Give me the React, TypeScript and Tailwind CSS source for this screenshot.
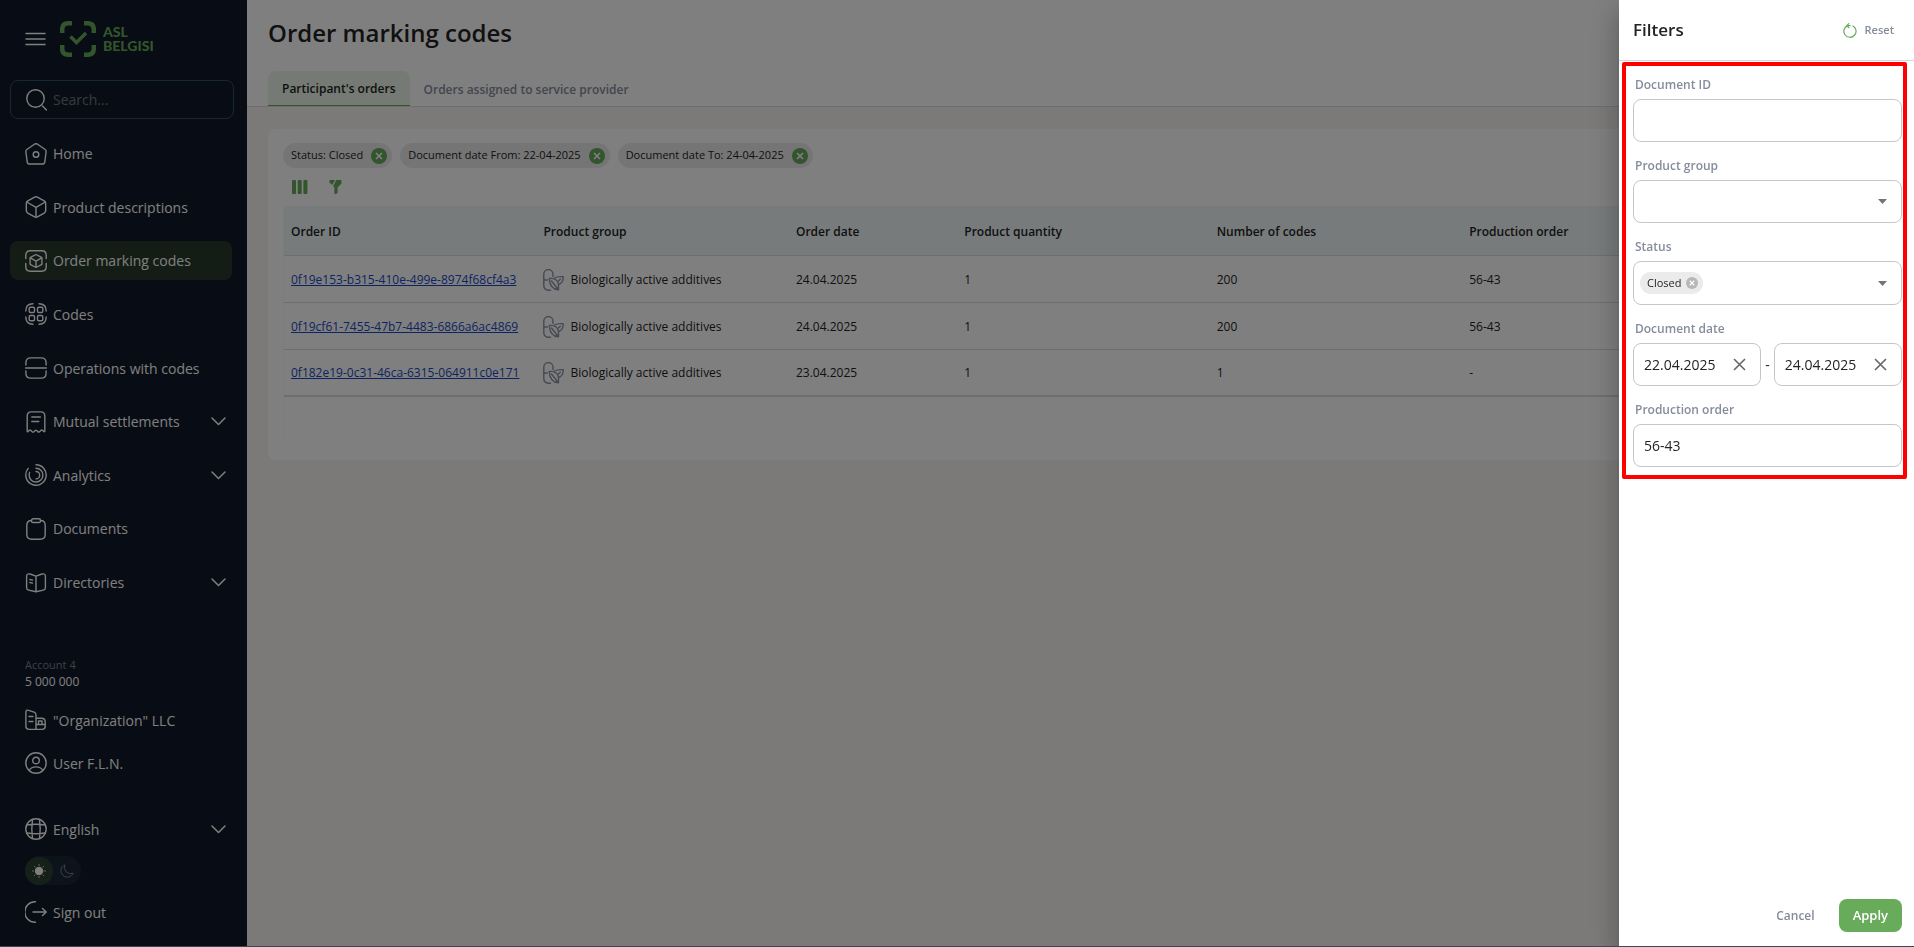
import * as React from "react"
import { clsx } from "clsx"

const Icon = ({ children, size = 22, className }: { children: React.ReactNode; size?: number; className?: string }) => (
  <svg
    width={size}
    height={size}
    viewBox="0 0 22 22"
    fill="none"
    stroke="currentColor"
    strokeWidth="1.4"
    strokeLinecap="round"
    strokeLinejoin="round"
    aria-hidden="true"
    className={clsx("shrink-0", className)}
  >
    {children}
  </svg>
)

const icons = {
  home: (
    <Icon>
      <path d="M9.4 1.2q1.6-1 3.2 0l7.2 5q1.5 1.1 1.3 2.8l-1.3 9.8q-.3 2.2-2.4 2.2H4.6q-2.1 0-2.4-2.2L.9 9Q.7 7.300 2.200 6.200z" />
      <circle cx="11" cy="11.500" r="2.800" />
    </Icon>
  ),
  cube: (
    <Icon>
      <path d="M9.600 1.100q1.400-.7 2.800 0l6.800 3.800q1.500.9 1.500 2.500v7.200q0 1.600-1.500 2.500l-6.800 3.800q-1.400.7-2.800 0l-6.800-3.800q-1.500-.9-1.500-2.500V7.400q0-1.600 1.500-2.500z" />
      <path d="M1.700 6 11 11.400 20.300 6M11 11.400v9.800" />
    </Icon>
  ),
  marking: (
    <Icon>
      <path d="M.8 8.500V5.300Q.8.800 5.300.800h11.400q4.500 0 4.500 4.500v3.200M.8 13.500v3.200q0 4.500 4.500 4.500h11.400q4.500 0 4.500-4.500v-3.200" />
      <path d="M11 4.500 16.900 7.700v6.600L11 17.500l-5.900-3.200V7.700zM5.300 7.900 11 11.100l5.700-3.200M11 11.100v6.200" />
    </Icon>
  ),
  codes: (
    <Icon>
      <path d="M.8 8Q.8.800 8 .8M14 .8q7.200 0 7.200 7.200M.8 14q0 7.200 7.200 7.200M14 21.200q7.200 0 7.200-7.200" />
      <rect x="4.200" y="4.200" width="5.300" height="5.300" rx="1.300" />
      <rect x="12.500" y="4.200" width="5.300" height="5.300" rx="1.300" />
      <rect x="4.200" y="12.500" width="5.300" height="5.300" rx="1.300" />
      <rect x="12.500" y="12.500" width="5.300" height="5.300" rx="1.300" />
    </Icon>
  ),
  operations: (
    <Icon>
      <path d="M.9 8V5.800Q.9.900 5.800.900h10.400q4.900 0 4.900 4.900V8M.9 14v2.200q0 4.900 4.900 4.900h10.400q4.900 0 4.900-4.900V14M.7 11h20.600" />
    </Icon>
  ),
  receipt: (
    <Icon>
      <path d="M2.200 20V5Q2.200.900 6.300.900h9.400q4.100 0 4.100 4.100v15q0 1.200-1 .5l-1.300-1.200q-.8-.8-1.700.1l-1.300 1.300q-.8.800-1.700 0L11.700 19.500q-.7-.7-1.500 0l-1.300 1.300q-.8.700-1.700 0l-1.300-1.300q-.9-.9-1.700-.1L3 20.600q-.8.500-.8-.6zM6.800 6h8.600M6.800 10.500h7" />
    </Icon>
  ),
  analytics: (
    <Icon>
      <path d="M11 .8a10.200 10.200 0 1 1-7.800 3.600" />
      <path d="M11 4.200a6.900 6.900 0 1 1-6.900 6.800q0-1.400.6-2.700" />
      <path d="M11 7.500a3.700 3.700 0 0 1 0 7.400" />
    </Icon>
  ),
  documents: (
    <Icon>
      <path d="M6.500 2.500Q1.800 2.500 1.800 7.500v8.700q0 5 5 5h8.400q5 0 5-5V7.500q0-5-4.700-5" />
      <rect x="6.500" y=".8" width="9" height="3.700" rx="1.600" />
    </Icon>
  ),
  book: (
    <Icon>
      <path d="M11 4.200v15.600M11 4.200 5 2Q1.600 1.200 1.600 4.400v11.400q0 2 2 2.300L11 19.800l7.400-1.700q2-.3 2-2.300V4.400q0-3.200-3.400-2.400zM4.900 7.500l2.600.6M4.900 10.500l2.600.6" />
    </Icon>
  ),
  building: (
    <Icon>
      <path d="M11 20.400H4Q.9 20.400.9 17.300V3.200q0-2.800 2.700-1.900l5.500 1.900Q11 3.900 11 6zM11 9.200h5.500q3.700 0 3.700 3.700v4.400q0 3.100-3.100 3.100H11M4 7.500h4M4 12.500h4M11.500 15.500h8.500M13.500 15.300v-3.300h3.500v3.300" />
    </Icon>
  ),
  user: (
    <Icon>
      <circle cx="11" cy="11" r="10.200" />
      <circle cx="11" cy="8.500" r="3.300" />
      <path d="M4.200 18.400q1.900-3.500 6.800-3.500t6.800 3.500" />
    </Icon>
  ),
  globe: (
    <Icon>
      <circle cx="11" cy="11" r="10.200" />
      <path d="M1.800 7q9.200-1.400 18.400 0M1.800 15q9.200 1.400 18.400 0M7.500 1.500q-1.400 9.500 0 19M14.500 1.500q1.400 9.500 0 19" />
    </Icon>
  ),
  signOut: (
    <Icon>
      <path d="M10.500.800H10a10.200 10.200 0 0 0 0 20.400h.5M8 11h13M17.500 7.500 21.200 11l-3.700 3.500" />
    </Icon>
  ),
  search: (
    <Icon>
      <circle cx="10.500" cy="9.500" r="8.700" />
      <path d="m17.500 17 4 4" />
    </Icon>
  ),
}

const Chevron = ({ className }: { className?: string }) => (
  <svg width="15" height="9" viewBox="0 0 15 9" fill="none" stroke="currentColor" strokeWidth="1.500" strokeLinecap="round" strokeLinejoin="round" aria-hidden="true" className={className}>
    <path d="m1 1 6.500 6.500L14 1" />
  </svg>
)

const CrossCircle = ({ size, className }: { size: number; className?: string }) => (
  <svg width={size} height={size} viewBox="0 0 16 16" aria-hidden="true" className={className}>
    <circle cx="8" cy="8" r="8" fill="currentColor" />
    <path d="m5 5 6 6M11 5l-6 6" stroke="#fff" strokeWidth="1.600" />
  </svg>
)

const PillLeafIcon = () => (
  <svg width="21" height="22" viewBox="0 0 21 22" fill="none" stroke="#8a94a6" strokeWidth="1.400" strokeLinecap="round" strokeLinejoin="round" aria-hidden="true" className="shrink-0">
    <path d="M10 7.500V5.200a4.500 4.500 0 0 0-9.200 0v11.300q0 4.200 4.200 4.700h2.500M1 11h3.300" />
    <path d="M6.200 9.500q7.500-.8 9.300 5.500v5.800Q7 20.600 6.200 9.500zM8.500 12l7 8.800" />
    <path d="M11.500 9q3-1.800 8.700-1.300.2 6.300-4.500 7.800M15.300 12l2-1.800" />
  </svg>
)

const navItems = [
  { label: "Home", icon: icons.home },
  { label: "Product descriptions", icon: icons.cube },
  { label: "Order marking codes", icon: icons.marking, active: true },
  { label: "Codes", icon: icons.codes },
  { label: "Operations with codes", icon: icons.operations },
  { label: "Mutual settlements", icon: icons.receipt, expandable: true },
  { label: "Analytics", icon: icons.analytics, expandable: true },
  { label: "Documents", icon: icons.documents },
  { label: "Directories", icon: icons.book, expandable: true },
]

const chips = ["Status: Closed", "Document date From: 22-04-2025", "Document date To: 24-04-2025"]

const columns = [
  { label: "Order ID", width: "w-3/19" },
  { label: "Product group", width: "w-3/19" },
  { label: "Order date", width: "w-2/19" },
  { label: "Product quantity", width: "w-3/19" },
  { label: "Number of codes", width: "w-3/19" },
  { label: "Production order", width: "w-5/19" },
]

const orders = [
  { id: "0f19e153-b315-410e-499e-8974f68cf4a3", group: "Biologically active additives", date: "24.04.2025", quantity: 1, codes: 200, production: "56-43" },
  { id: "0f19cf61-7455-47b7-4483-6866a6ac4869", group: "Biologically active additives", date: "24.04.2025", quantity: 1, codes: 200, production: "56-43" },
  { id: "0f182e19-0c31-46ca-6315-064911c0e171", group: "Biologically active additives", date: "23.04.2025", quantity: 1, codes: 1, production: "-" },
]

function Logo() {
  return (
    <div className="flex items-center gap-[7px] text-[#67ab5b]">
      <svg width="36" height="36" viewBox="0 0 36 36" fill="none" stroke="currentColor" strokeWidth="4.500" aria-hidden="true">
        <path d="M2.200 12V8.500q0-6.300 6.300-6.300H12M24 2.200h3.500q6.300 0 6.300 6.300V12M33.800 24v3.500q0 6.300-6.300 6.300H24M12 33.800H8.500q-6.300 0-6.300-6.300V24" />
        <path d="m10.500 15.500 6 6L26 12" strokeWidth="3.500" />
      </svg>
      <div className="flex flex-col font-[Lato] text-[14px] leading-[14px] font-black">
        <span>ASL</span>
        <span>BELGISI</span>
      </div>
    </div>
  )
}

function Sidebar() {
  return (
    <aside className="flex w-[247px] shrink-0 flex-col bg-[#101828] text-[14px] text-white">
      <div className="flex h-[64px] items-center gap-[14px] pt-[14px] pl-[25px]">
        <button type="button" aria-label="Menu">
          <svg width="21" height="14" viewBox="0 0 21 14" stroke="currentColor" strokeWidth="1.500" strokeLinecap="round" aria-hidden="true">
            <path d="M1 1.500h19M1 7h19M1 12.500h19" />
          </svg>
        </button>
        <Logo />
      </div>

      <label className="mt-4 mr-[13px] ml-[10px] flex h-[39px] items-center gap-[6px] rounded-lg border border-[#2f5260] pl-[14px]">
        {icons.search}
        <input type="search" placeholder="Search..." aria-label="Search" className="w-full bg-transparent outline-none placeholder:text-[#70757e]" />
      </label>

      <nav className="mt-[15px] mr-[15px] ml-[10px] flex h-[468px] flex-col justify-between">
        {navItems.map((item) => {
          const style = clsx("flex h-[39px] items-center gap-[6px] rounded-lg pr-[6px] pl-[15px] text-left", item.active && "bg-[#263a2c]")
          return item.expandable ? (
            <button key={item.label} type="button" className={style}>
              {item.icon}
              {item.label}
              <Chevron className="ml-auto" />
            </button>
          ) : (
            <a key={item.label} href="#" className={style}>
              {item.icon}
              {item.label}
            </a>
          )
        })}
      </nav>

      <div className="flex flex-col pr-[21px] pl-[25px]">
        <div className="mt-[55px] text-[11px] leading-4 text-[#7b828e]">Account 4</div>
        <div className="text-[12px] leading-[18px]">5 000 000</div>
        <a href="#" className="mt-[17px] flex h-[24px] items-center gap-[6px]">
          {icons.building}
          "Organization" LLC
        </a>
        <a href="#" className="mt-[19px] flex h-[24px] items-center gap-[6px]">
          {icons.user}
          User F.L.N.
        </a>
        <label className="mt-[42px] flex h-[24px] items-center gap-[6px]">
          {icons.globe}
          <select aria-label="Language" className="flex-1 appearance-none bg-transparent outline-none">
            <option>English</option>
          </select>
          <Chevron />
        </label>
        <button type="button" role="switch" aria-checked="false" aria-label="Dark theme" className="mt-[15px] flex h-[29px] w-[56px] items-center rounded-full bg-[#1a2634]">
          <span className="flex size-[28px] items-center justify-center rounded-full bg-[#2a4330]">
            <svg width="14" height="14" viewBox="0 0 14 14" stroke="currentColor" strokeLinecap="round" aria-hidden="true">
              <circle cx="7" cy="7" r="3.700" fill="currentColor" />
              <path d="M7 .7v.6M7 12.700v.6M.7 7h.6M12.700 7h.6M2.600 2.600l.4.400M11 11l.4.400M2.600 11.400l.4-.4M11 3l.4-.4" />
            </svg>
          </span>
          <svg width="14" height="14" viewBox="0 0 14 14" fill="none" stroke="#7d8794" strokeLinejoin="round" aria-hidden="true" className="ml-[7px]">
            <path d="M4.800.8a6.400 6.400 0 1 0 8.400 8.400A6.400 6.400 0 0 1 4.800.8z" />
          </svg>
        </button>
        <a href="#" className="mt-[15px] flex h-[24px] items-center gap-[6px]">
          {icons.signOut}
          Sign out
        </a>
      </div>
    </aside>
  )
}

function OrdersTable() {
  return (
    <div className="min-h-[238px] border-l border-[#fafafa]">
      <table className="w-full table-fixed border-collapse text-left text-[12px] text-[#232323]">
        <thead>
          <tr className="h-[49px] border-b border-[#dcdcdc] bg-[#f0f7f8]">
            {columns.map((column) => (
              <th key={column.label} className={clsx("pt-1 pl-[7px] font-semibold", column.width)}>
                {column.label}
              </th>
            ))}
          </tr>
        </thead>
        <tbody>
          {orders.map((order) => (
            <tr key={order.id} className="h-[47px] border-b border-[#dcdcdc] last:border-b-2">
              <td className="pt-0.5 pl-[7px]">
                <a href="#" className="text-[#1a49c4] underline">
                  {order.id}
                </a>
              </td>
              <td className="pt-0.5 pl-[7px]">
                <span className="flex items-center gap-[6px]">
                  <PillLeafIcon />
                  {order.group}
                </span>
              </td>
              <td className="pt-0.5 pl-[7px]">{order.date}</td>
              <td className="pt-0.5 pl-[7px]">{order.quantity}</td>
              <td className="pt-0.5 pl-[7px]">{order.codes}</td>
              <td className="pt-0.5 pl-[7px]">{order.production}</td>
            </tr>
          ))}
        </tbody>
      </table>
    </div>
  )
}

function Orders() {
  return (
    <main className="min-w-0 flex-1 bg-[#f6f5f0]">
      <header className="border-b border-[#dcdcdc] bg-white pl-[21px]">
        <h1 className="pt-4 text-[24px] leading-[34px] font-semibold text-[#232323]">Order marking codes</h1>
        <div role="tablist" className="mt-[21px] flex text-[12px] font-semibold">
          <button type="button" role="tab" aria-selected="true" className="h-[35px] rounded-t-lg border-b border-[#67ab5b] bg-[#eaf4e8] px-[14px] pt-0.5 text-[#232323]">
            Participant's orders
          </button>
          <button type="button" role="tab" aria-selected="false" className="h-[35px] px-[14px] pt-0.5 text-[#858c9b]">
            Orders assigned to service provider
          </button>
        </div>
      </header>

      <section className="mt-[22px] mr-4 ml-[21px] rounded-lg bg-white px-[15px] pt-[14px] pb-4">
        <div className="flex gap-2">
          {chips.map((chip) => (
            <span key={chip} className="flex h-[25px] items-center gap-2 rounded-full bg-[#ebebeb] pr-[5px] pl-2 text-[11px] text-[#232323]">
              {chip}
              <button type="button" aria-label={"Remove " + chip} className="text-[#67ab5b]">
                <CrossCircle size={16} />
              </button>
            </span>
          ))}
        </div>
        <div className="flex h-[38px] items-center gap-[21px] pl-[9px] text-[#67ab5b]">
          <button type="button" aria-label="Columns">
            <svg width="16" height="14" viewBox="0 0 16 14" fill="currentColor" aria-hidden="true">
              <rect width="4" height="14" rx="1" />
              <rect x="5.700" width="4" height="14" rx="1" />
              <rect x="11.400" width="4" height="14" rx="1" />
            </svg>
          </button>
          <button type="button" aria-label="Filters">
            <svg width="13" height="14" viewBox="0 0 13 14" fill="currentColor" aria-hidden="true">
              <path d="M7.300 0H11.500q1 0 1 1v1.800q0 .7-.5 1.200L8.600 7.500v5q0 .8-.8 1.100l-1.400.4q-1 .2-1-.8V7.500L4.200 6z" />
              <path d="M1.300 0h4.800L3.200 4.900.9 2.900Q.4 2.400.4 1.800V.9Q.4 0 1.300 0z" />
            </svg>
          </button>
        </div>
        <OrdersTable />
      </section>
    </main>
  )
}

const fieldBox = "rounded-lg border border-[#c6c6c6] bg-white"
const fieldLabel = "pl-[2px] text-[12px] leading-[18px] font-semibold text-[#858c9b]"

function TextField({ label, value }: { label: string; value?: string }) {
  const id = React.useId()
  return (
    <div className="flex flex-col gap-[5px]">
      <label htmlFor={id} className={fieldLabel}>{label}</label>
      <input id={id} type="text" defaultValue={value} className={clsx(fieldBox, "h-[43px] w-full px-[10px] outline-none")} />
    </div>
  )
}

function SelectField({ label, tag }: { label: string; tag?: string }) {
  const id = React.useId()
  return (
    <div className="flex flex-col gap-[5px]">
      <label htmlFor={id} className={fieldLabel}>{label}</label>
      <div className={clsx(fieldBox, "flex items-center pr-[14px] pl-[6px]", tag ? "h-[44px]" : "h-[43px]")}>
        {tag && (
          <span className="flex h-[22px] items-center gap-[5px] rounded-full bg-[#ebebeb] pr-[5px] pl-[7px] text-[11px]">
            {tag}
            <button type="button" aria-label={"Remove " + tag} className="text-[#b7b7b7]">
              <CrossCircle size={12} />
            </button>
          </span>
        )}
        <select id={id} className="h-full flex-1 appearance-none bg-transparent outline-none">
          <option></option>
        </select>
        <svg width="9" height="5" viewBox="0 0 9 5" fill="#757575" aria-hidden="true">
          <path d="M0 0h9L4.500 5z" />
        </svg>
      </div>
    </div>
  )
}

function DateInput({ label, value }: { label: string; value: string }) {
  return (
    <div className={clsx(fieldBox, "flex h-[43px] min-w-0 flex-1 items-center pr-[14px] pl-[10px]")}>
      <input type="text" aria-label={label} defaultValue={value} className="w-0 flex-1 outline-none" />
      <button type="button" aria-label={"Clear " + label}>
        <svg width="13" height="13" viewBox="0 0 13 13" stroke="#666" strokeWidth="1.600" aria-hidden="true">
          <path d="m1 1 11 11M12 1 1 12" />
        </svg>
      </button>
    </div>
  )
}

function FiltersDrawer() {
  return (
    <div
      role="dialog"
      aria-label="Filters"
      className="fixed inset-y-0 right-0 flex w-[295px] flex-col bg-white text-[14px] text-[#232323] shadow-[0_8px_10px_-5px_rgba(0,0,0,0.2),0_16px_24px_2px_rgba(0,0,0,0.14),0_6px_30px_5px_rgba(0,0,0,0.12)]"
    >
      <div className="flex h-[61px] shrink-0 items-center justify-between border-b border-[#d8d8d8] pr-5 pl-[14px]">
        <h2 className="text-[17px] font-semibold">Filters</h2>
        <button type="button" className="flex items-center gap-2 text-[11px] font-semibold text-[#858c9b]">
          <svg width="14" height="15" viewBox="0 0 14 15" fill="none" stroke="#67ab5b" strokeWidth="1.200" strokeLinecap="round" strokeLinejoin="round" aria-hidden="true">
            <path d="M10 2.900a6.100 6.100 0 1 1-5.500-.3M4 2.500h3.200M4 2.500 5.800.7M4 2.500l1.800 2" />
          </svg>
          Reset
        </button>
      </div>

      <form className="mt-px mr-[7px] ml-[3px] flex flex-col gap-[15px] rounded-[2px] border-4 border-[#ff0000] pt-[10px] pr-px pb-2 pl-[7px]">
        <TextField label="Document ID" />
        <SelectField label="Product group" />
        <SelectField label="Status" tag="Closed" />
        <fieldset className="min-w-0">
          <legend className={clsx(fieldLabel, "mb-[5px]")}>Document date</legend>
          <div className="flex items-center gap-1">
            <DateInput label="date from" value="22.04.2025" />
            <span>-</span>
            <DateInput label="date to" value="24.04.2025" />
          </div>
        </fieldset>
        <TextField label="Production order" value="56-43" />
      </form>

      <div className="mt-auto flex items-center justify-end gap-6 pr-3 pb-[15px] text-[12px] font-semibold">
        <button type="button" className="text-[#858c9b]">Cancel</button>
        <button type="button" className="h-[33px] rounded-lg bg-[#67ab5b] px-[14px] text-[13px] text-white">Apply</button>
      </div>
    </div>
  )
}

export default function App() {
  return (
    <div className="flex min-h-screen font-['Open_Sans','Noto_Sans',sans-serif]">
      <Sidebar />
      <Orders />
      <div className="fixed inset-0 bg-black/50" />
      <FiltersDrawer />
      <div className="fixed inset-x-0 bottom-0 h-px bg-[#34495a]" />
    </div>
  )
}
